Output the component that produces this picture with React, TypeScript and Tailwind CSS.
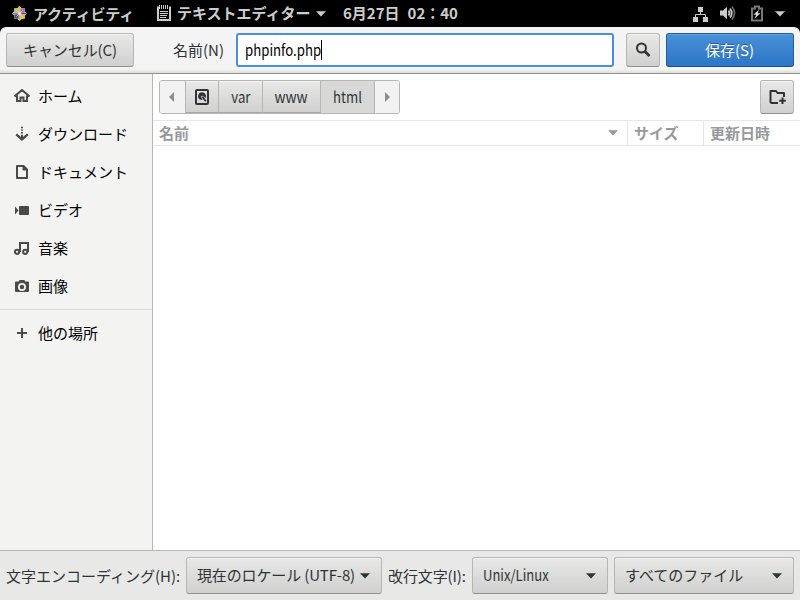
import type { ReactNode } from "react";

const BTN =
  "flex h-[34px] shrink-0 items-center justify-center rounded-[3px] border border-[#b6b6b3] border-b-[#91918c] bg-linear-to-b from-[#e8e8e7] to-[#d0d0ce] shadow-[inset_0_1px_#f6f6f5]";
const COMBO =
  "flex h-[37px] shrink-0 items-center justify-between rounded-[3px] border border-[#b6b6b3] border-b-[#91918c] bg-linear-to-b from-[#e8e8e7] to-[#d0d0ce] pr-[11px] pl-[10px] shadow-[inset_0_1px_#f6f6f5]";
const SEG =
  "flex h-full shrink-0 items-center justify-center border-r border-[#b6b6b3]";
const RAISED = "bg-linear-to-b from-[#e8e8e7] to-[#d0d0ce] shadow-[inset_0_1px_#f6f6f5,inset_0_-1px_#a8a8a4]";

function Icon({ children, className = "" }: { children: ReactNode; className?: string }) {
  return (
    <svg width="16" height="16" viewBox="0 0 16 16" fill="none" stroke="currentColor" strokeWidth="2" className={"shrink-0 " + className}>
      {children}
    </svg>
  );
}

function Caret({ className = "" }: { className?: string }) {
  return (
    <svg width="10" height="6" viewBox="0 0 10 6" fill="currentColor" className={"shrink-0 " + className}>
      <path d="M0 0.3H10L5 5.5Z" />
    </svg>
  );
}

const places: { label: string; icon: ReactNode }[] = [
  { label: "ホーム", icon: <path d="M0.5 8.5L8 2L15.5 8.5M3 7.5V13H6.5V9.5H9.5V13H13V7.5" /> },
  {
    label: "ダウンロード",
    icon: (
      <>
        <path d="M2.2 8.3L8 13.3L13.8 8.3" strokeWidth="2.4" />
        <path d="M8 0.8V2.2M8 3.4V4.8M8 6V7.6M8 8.8V13" />
      </>
    ),
  },
  { label: "ドキュメント", icon: <path d="M3 2H9.5L13 5.5V14H3ZM9.5 2V5.5H13" strokeLinejoin="round" /> },
  {
    label: "ビデオ",
    icon: (
      <g fill="currentColor" stroke="none">
        <rect x="5" y="4" width="10" height="9" rx="1" />
        <path d="M1 4.5L4.5 8.5L1 12.5Z" />
      </g>
    ),
  },
  {
    label: "音楽",
    icon: (
      <>
        <circle cx="3" cy="11.8" r="2.1" />
        <circle cx="11.2" cy="11.8" r="2.1" />
        <path d="M6 12V3H14V12" />
      </>
    ),
  },
  {
    label: "画像",
    icon: (
      <path
        fill="currentColor"
        stroke="none"
        fillRule="evenodd"
        d="M5.5 2H10.5L11.2 3.5H14Q15 3.5 15 4.5V13Q15 14 14 14H2Q1 14 1 13V4.5Q1 3.5 2 3.5H4.8ZM8 5A4 4 0 1 0 8 13A4 4 0 1 0 8 5ZM8 6.8A2.2 2.2 0 1 1 8 11.2A2.2 2.2 0 1 1 8 6.8Z"
      />
    ),
  },
];

function TopBar() {
  return (
    <div className="flex h-[27px] shrink-0 items-center bg-black text-[15px] font-bold text-[#cccccc]">
      <svg width="15" height="15" viewBox="0 0 16 16" className="ml-[12px] shrink-0">
        <path d="M8 0L10.4 2.4H13.6V5.6L16 8L13.6 10.4V13.6H10.4L8 16L5.6 13.6H2.4V10.4L0 8L2.4 5.6V2.4H5.6Z" fill="#e6dccb" />
        <path d="M2.6 2.6H7.2V7.2H2.6Z" fill="#a6cf5a" />
        <path d="M8.8 2.6H13.4V7.2H8.8Z" fill="#b565aa" />
        <path d="M2.6 8.8H7.2V13.4H2.6Z" fill="#4b4794" />
        <path d="M8.8 8.8H13.4V13.4H8.8Z" fill="#f2b341" />
        <path d="M8 0.5V6" stroke="#efb34d" strokeWidth="1.6" />
        <path d="M10 8H15.5" stroke="#5a569c" strokeWidth="1.6" />
        <path d="M8 10V15.5" stroke="#a9c965" strokeWidth="1.6" />
        <path d="M0.5 8H6" stroke="#b873ae" strokeWidth="1.6" />
        <path d="M4.5 4.5L11.5 11.5M11.5 4.5L4.5 11.5" stroke="#f0e8dc" strokeWidth="0.7" />
      </svg>
      <span className="ml-[6px] w-[101px] whitespace-nowrap leading-[27px] tracking-[-0.2px]">アクティビティ</span>
      <svg width="14" height="16" viewBox="0 0 14 16" className="ml-[23px] shrink-0 -translate-y-px" fill="none" stroke="currentColor">
        <path d="M2 2.5H1V15H13V2.5H12" strokeWidth="2" />
        <path d="M2.5 0V4M4.5 0V4M6.5 0V4M8.5 0V4M10.5 0V4" strokeWidth="1" />
        <path d="M3 6.5H11M3 8.5H11M3 10.5H10M3 12.5H9" />
      </svg>
      <span className="ml-[6px] w-[135px] whitespace-nowrap tracking-normal">テキストエディター</span>
      <Caret className="ml-[4px]" />
      <span className="ml-[17px] whitespace-nowrap">6月27日</span>
      <span className="ml-[8px] whitespace-nowrap">02：40</span>
      <div className="ml-auto flex items-center pr-[15px]">
        <svg width="16" height="16" viewBox="0 0 16 16" fill="currentColor">
          <path d="M5 1H10V6H5ZM0 11H5V16H0ZM10 11H15V16H10Z" />
          <path d="M7.5 5V8.5M2.5 11V8.5H12.5V11" fill="none" stroke="currentColor" />
        </svg>
        <svg width="16" height="16" viewBox="0 0 16 16" className="ml-[11px] -translate-y-px" fill="none" stroke="currentColor" strokeWidth="1.7">
          <path d="M0 5.5H3L7 2V14L3 10.5H0Z" fill="currentColor" stroke="none" />
          <path d="M8.5 5.5Q10.5 8 8.5 10.5M10 3.5Q13.5 8 10 12.5" />
          <path d="M12 1.5Q17 8 12 14.5" stroke="#666" />
        </svg>
        <svg width="12" height="17" viewBox="0 0 12 17" className="ml-[15px]">
          <path d="M4 1.5H8V3.5H11V15.5H1V3.5H4Z" fill="none" stroke="#777777" strokeWidth="2" />
          <path d="M8 4.5L2.5 9.8H5.3L3.5 13.5L9.5 8.3H6.7Z" fill="#e0e0e0" />
        </svg>
        <Caret className="ml-[12px]" />
      </div>
    </div>
  );
}

export default function App() {
  return (
    <div className="flex h-[600px] w-[800px] flex-col overflow-hidden bg-black font-['Noto_Sans_CJK_JP','Noto_Sans',sans-serif] text-[15px] text-[#2e3436]">
      <TopBar />
      <header className="flex h-[47px] shrink-0 items-start rounded-t-[6px] border-b border-[#92928c] bg-linear-to-b from-[#f4f4f4] from-92% to-[#dcdcda] px-[6px] pt-[6px]">
        <button className={BTN + " w-[128px]"}>
          <span className="whitespace-nowrap tracking-[-0.1px]">キャンセル(C)</span>
        </button>
        <label className="ml-[39px] flex h-[34px] w-[63px] items-center whitespace-nowrap">名前(N)</label>
        <div className="flex h-[34px] w-[378px] items-center rounded-[3px] border-2 border-[#4a90d9] bg-white pl-[7px] text-black">
          <span className="w-[76px] whitespace-nowrap">
            <span className="inline-block origin-left scale-x-[0.88]">phpinfo.php</span>
          </span>
          <span className="h-[20px] w-px bg-black" />
        </div>
        <button className={BTN + " ml-[12px] w-[34px]"}>
          <Icon className="text-[#2e3436]">
            <circle cx="6.5" cy="6" r="4.5" />
            <path d="M9.5 9L14.5 14" strokeWidth="2.6" />
          </Icon>
        </button>
        <button className="ml-[6px] flex h-[34px] w-[128px] items-center justify-center rounded-[3px] border border-[#1f5f9f] border-b-[#184f88] bg-linear-to-b from-[#4a90d9] to-[#2a76c6] pr-px text-white shadow-[inset_0_1px_#639fdd] [text-shadow:0_-1px_#24609b]">
          保存(S)
        </button>
      </header>

      <div className="flex min-h-0 flex-1">
        <aside className="w-[153px] shrink-0 border-r border-[#b6b6b3] bg-[#f3f3f2] pt-[3px] text-black">
          {places.map((p) => (
            <div key={p.label} className="flex h-[38px] items-center pl-[14px]">
              <Icon className="text-[#4a4a48]">{p.icon}</Icon>
              <span className="ml-[8px] whitespace-nowrap">{p.label}</span>
            </div>
          ))}
          <div className="mt-[4px] mb-[4px] h-px bg-[#d8d8d6]" />
          <div className="flex h-[38px] items-center pl-[14px]">
            <Icon className="text-[#4a4a48]">
              <path d="M8 3V13M3 8H13" />
            </Icon>
            <span className="ml-[8px]">他の場所</span>
          </div>
        </aside>

        <main className="flex flex-1 flex-col bg-white">
          <div className="flex h-[46px] shrink-0 items-start justify-between px-[6px] pt-[6px]">
            <div className="flex h-[34px] w-[241px] overflow-hidden rounded-[3px] border border-[#b6b6b3] text-[15px]">
              <div className={SEG + " w-[26px] bg-[#f2f2f2] pr-[2px] text-[#8b8e8f]"}>
                <svg width="5" height="10" viewBox="0 0 5 10" fill="currentColor"><path d="M5 0V10L0 5Z" /></svg>
              </div>
              <div className={SEG + " w-[33px] " + RAISED}>
                <svg width="14" height="16" viewBox="0 0 14 16" fill="none" stroke="currentColor">
                  <rect x="1" y="1" width="12" height="14" rx="1" strokeWidth="2" />
                  <path d="M7 3.2A4 4 0 0 0 5 10.6L7.5 11L6 7.5L7 6.5L10.6 9A4 4 0 0 0 7 3.2Z" fill="currentColor" stroke="none" />
                  <path d="M7.3 7.8L10.8 12.2" strokeWidth="1.8" />
                </svg>
              </div>
              <div className={SEG + " w-[44px] " + RAISED}><span className="scale-x-[0.88]">var</span></div>
              <div className={SEG + " w-[58px] " + RAISED}><span className="scale-x-[0.92]">www</span></div>
              <div className={SEG + " w-[54px] bg-[#d8d8d6]"}><span className="scale-x-[0.88]">html</span></div>
              <div className="flex h-full flex-1 items-center justify-center bg-[#f2f2f2] text-[#8b8e8f]">
                <svg width="5" height="10" viewBox="0 0 5 10" fill="currentColor"><path d="M0 0V10L5 5Z" /></svg>
              </div>
            </div>
            <button className={BTN + " w-[34px]"}>
              <svg width="17" height="16" viewBox="0 0 17 16" fill="none" stroke="currentColor" strokeWidth="2">
                <path d="M9 14H2.5L1.5 13V2H7L8.5 4H15V8" strokeLinejoin="round" />
                <path d="M13.5 8.5V15M10.2 11.8H16.8" />
              </svg>
            </button>
          </div>
          <div className="flex h-[26px] shrink-0 border-y border-[#e6e6e5] font-bold text-[#969a9b]">
            <div className="flex w-[475px] items-center justify-between border-r border-[#e6e6e5] pr-[9px] pl-[6px]">
              <span>名前</span>
              <Caret />
            </div>
            <div className="flex w-[76px] items-center border-r border-[#e6e6e5] pl-[6px]">サイズ</div>
            <div className="flex items-center pl-[6px]">更新日時</div>
          </div>
        </main>
      </div>

      <footer className="flex h-[50px] shrink-0 items-start border-t border-[#b6b6b3] bg-[#e8e8e7] px-[6px] pt-[6px]">
        <span className="flex h-[37px] w-[180px] items-center whitespace-nowrap pt-px">文字エンコーディング(H):</span>
        <button className={COMBO + " w-[196px]"}>
          <span className="whitespace-nowrap tracking-[-0.14px]">現在のロケール (UTF-8)</span>
          <Caret />
        </button>
        <span className="ml-[6px] flex h-[37px] w-[84px] items-center whitespace-nowrap pt-px tracking-[-0.1px]">改行文字(I):</span>
        <button className={COMBO + " w-[136px]"}>
          <span className="origin-left scale-x-[0.87] pb-px">Unix/Linux</span>
          <Caret />
        </button>
        <button className={COMBO + " ml-[6px] w-[180px]"}>
          <span className="whitespace-nowrap">すべてのファイル</span>
          <Caret />
        </button>
      </footer>
    </div>
  );
}
